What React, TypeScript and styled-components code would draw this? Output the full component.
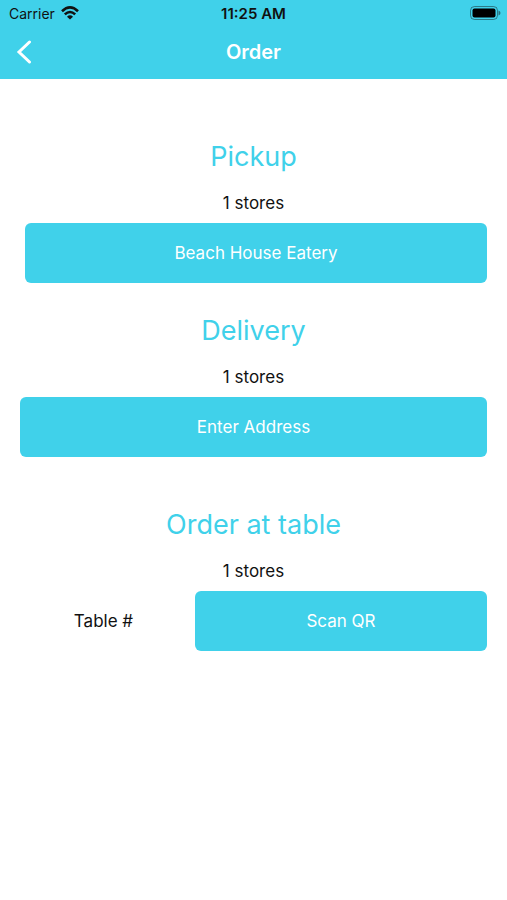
import React from "react";
import styled, { createGlobalStyle } from "styled-components";

const Global = createGlobalStyle`
  * { box-sizing: border-box; }
  body { margin: 0; background: #fff; font-family: Inter, "Liberation Sans", sans-serif; color: #111; }
`;
const Header = styled.header`background: #40d1ea;`;
const StatusBar = styled.div`
  display: grid;
  grid-template-columns: 1fr auto 1fr;
  align-items: start;
  padding: 6px 6px 3px;
  font-size: 14px;
  line-height: 16px;
`;
const Carrier = styled.div`
  display: flex;
  align-items: flex-start;
  gap: 6px;
  padding-left: 3px;
`;
const Clock = styled.time`font-size: 15px; font-weight: 600;`;
const Battery = styled.svg`justify-self: end; display: block;`;
const NavBar = styled.nav`
  display: grid;
  grid-template-columns: 52px 1fr 52px;
  align-items: center;
  height: 54px;
`;
const BackButton = styled.button`
  display: flex;
  align-items: center;
  height: 52px;
  padding: 0 0 0 15px;
  border: 0;
  background: none;
`;
const PageTitle = styled.h1`
  margin: 0;
  color: #fff;
  font-size: 20px;
  font-weight: 600;
  line-height: 28px;
  text-align: center;
`;
const Main = styled.main`padding: 57px 20px 0;`;
const Section = styled.section<{ $gap?: number }>`margin-bottom: ${(p) => p.$gap ?? 0}px;`;
const Heading = styled.h2`
  margin: 0;
  color: #40d1ea;
  font-size: 27px;
  font-weight: 400;
  line-height: 42px;
  text-align: center;
`;
const StoreCount = styled.p`
  margin: 14px 0 9px;
  font-size: 17px;
  line-height: 22px;
  text-align: center;
`;
const ActionRow = styled.div<{ $inset?: boolean }>`
  display: flex;
  align-items: center;
  padding-left: ${(p) => (p.$inset ? 5 : 0)}px;
`;
const ActionButton = styled.button`
  flex: 1;
  height: 60px;
  border: 0;
  border-radius: 6px;
  background: #40d1ea;
  color: #fff;
  font: inherit;
  font-size: 17px;
`;
const TableField = styled.input`
  width: 167px;
  margin-right: 8px;
  padding: 0;
  border: 0;
  outline: 0;
  background: none;
  color: #111;
  font: inherit;
  font-size: 17px;
  line-height: 22px;
  text-align: center;
  &::placeholder { color: #111; opacity: 1; }
`;

export default function App() {
  return (
    <>
      <Global />
      <Header>
        <StatusBar>
          <Carrier>
            <span>Carrier</span>
            <svg width="18" height="14" viewBox="0 0 18 14" fill="none" stroke="#111" strokeWidth="2.6" aria-hidden="true">
              <path d="M1 5.2Q9-2.4 17 5.2M3.8 8.4Q9 3.6 14.2 8.4" />
              <path d="M6 10.7Q9 8 12 10.7L9 13.6Z" fill="#111" stroke="none" />
            </svg>
          </Carrier>
          <Clock>11:25 AM</Clock>
          <Battery width="31" height="14" viewBox="0 0 31 14" role="img" aria-label="Battery full">
            <rect x="0.5" y="0.5" width="27" height="13" rx="4" fill="none" stroke="#111" strokeOpacity="0.45" />
            <rect x="2.5" y="2.5" width="23" height="9" rx="2" fill="#000" />
            <path d="M28.5 4.5Q30.5 5.2 30.5 7T28.5 9.5Z" fill="#111" fillOpacity="0.5" />
          </Battery>
        </StatusBar>
        <NavBar>
          <BackButton type="button" aria-label="Back">
            <svg width="18" height="24" viewBox="0 0 18 24" fill="none" stroke="#fff" strokeWidth="3" strokeLinecap="round" strokeLinejoin="miter">
              <path d="M14.5 2L4 12L14.5 22" />
            </svg>
          </BackButton>
          <PageTitle>Order</PageTitle>
        </NavBar>
      </Header>
      <Main>
        <Section $gap={27}>
          <Heading>Pickup</Heading>
          <StoreCount>1 stores</StoreCount>
          <ActionRow $inset><ActionButton type="button">Beach House Eatery</ActionButton></ActionRow>
        </Section>
        <Section $gap={47}>
          <Heading>Delivery</Heading>
          <StoreCount>1 stores</StoreCount>
          <ActionRow><ActionButton type="button">Enter Address</ActionButton></ActionRow>
        </Section>
        <Section>
          <Heading>Order at table</Heading>
          <StoreCount>1 stores</StoreCount>
          <ActionRow>
            <TableField aria-label="Table number" placeholder="Table #" />
            <ActionButton type="button">Scan QR</ActionButton>
          </ActionRow>
        </Section>
      </Main>
    </>
  );
}
